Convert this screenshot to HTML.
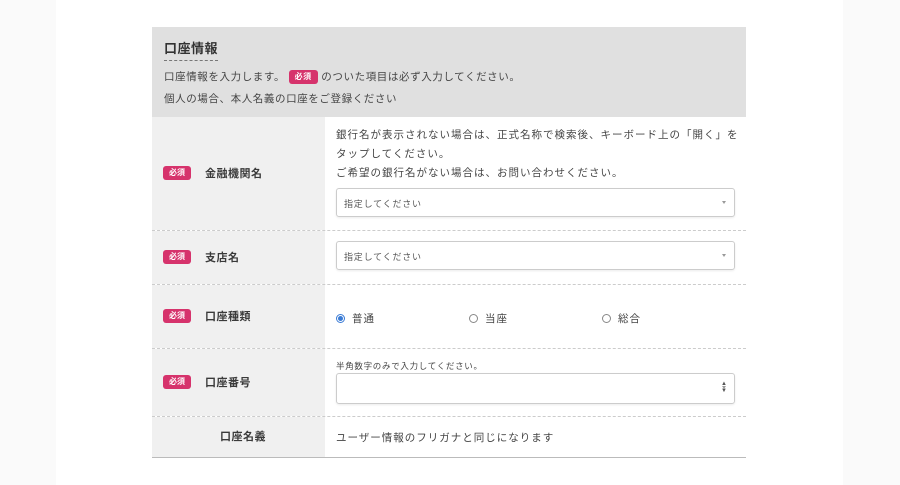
<!DOCTYPE html>
<html><head><meta charset="utf-8"><style>
*{margin:0;padding:0;box-sizing:border-box}
body{width:900px;height:485px;background:#fafafa;font-family:"Liberation Sans","Noto Sans CJK JP",sans-serif;color:#333;position:relative;overflow:hidden}
.col{position:absolute;left:56px;top:0;width:787px;height:485px;background:#fff}
.hd{position:absolute;left:152px;top:27px;width:594px;height:90px;background:#e0e0e0}
.hd h2{position:absolute;left:12px;top:11px;font-size:13px;font-weight:bold;color:#333;padding-bottom:3px;border-bottom:1px dashed #777;letter-spacing:.5px}
.hd p{position:absolute;left:12px;font-size:10.5px;color:#444;letter-spacing:.6px}
.badge{display:inline-block;background:#d6336c;color:#fff;font-size:8px;border-radius:3px;padding:1px 6px;line-height:12px;vertical-align:middle;font-weight:bold}
.row{position:absolute;left:152px;width:594px;border-bottom:1px dashed #ccc}
.lab{position:absolute;left:0;top:0;bottom:0;width:173px;background:#f0f0f0}
.lab .badge{position:absolute;left:11px;top:50%;margin-top:-8px}
.lab span.t{position:absolute;left:53px;top:50%;margin-top:-9px;font-size:11px;font-weight:bold;color:#3a3a3a;letter-spacing:.5px}
.ct{position:absolute;left:184px;font-size:10.5px;color:#444;letter-spacing:1px}
.sel{position:absolute;left:184px;width:399px;height:29px;border:1px solid #ccc;border-radius:3px;font-size:9px;color:#555;padding:8px 7px;letter-spacing:.8px;box-shadow:0 1px 2px rgba(0,0,0,.08)}
.sel:after{content:"";position:absolute;right:8px;top:12px;border:2.5px solid transparent;border-top:3.5px solid #999}
.rad{position:absolute;font-size:10.5px;color:#444;top:27px;letter-spacing:1px}
.rad i{display:inline-block;width:9px;height:9px;border:1px solid #888;border-radius:50%;margin-right:7px;vertical-align:-1px}
.rad i.on{border-color:#3a7bd5;background:radial-gradient(circle,#3a7bd5 2.2px,#fff 2.8px)}
</style></head><body>
<div class="col"></div>
<div class="hd">
<h2>口座情報</h2>
<p style="top:42px">口座情報を入力します。 <span class="badge">必須</span> のついた項目は必ず入力してください。</p>
<p style="top:64px">個人の場合、本人名義の口座をご登録ください</p>
</div>
<div class="row" style="top:117px;height:114px"><div class="lab"><span class="badge">必須</span><span class="t">金融機関名</span></div>
<div class="ct" style="top:9px;line-height:19px">銀行名が表示されない場合は、正式名称で検索後、キーボード上の「開く」を<br>タップしてください。<br>ご希望の銀行名がない場合は、お問い合わせください。</div>
<div class="sel" style="top:71px">指定してください</div></div>
<div class="row" style="top:231px;height:54px"><div class="lab"><span class="badge">必須</span><span class="t">支店名</span></div>
<div class="sel" style="top:10px">指定してください</div></div>
<div class="row" style="top:285px;height:64px"><div class="lab"><span class="badge">必須</span><span class="t">口座種類</span></div>
<div class="rad" style="left:184px;top:26px"><i class="on"></i>普通</div>
<div class="rad" style="left:317px;top:26px"><i></i>当座</div>
<div class="rad" style="left:450px;top:26px"><i></i>総合</div></div>
<div class="row" style="top:349px;height:68px"><div class="lab"><span class="badge">必須</span><span class="t">口座番号</span></div>
<div class="ct" style="top:11px;font-size:8.5px;letter-spacing:.7px">半角数字のみで入力してください。</div>
<div class="sel" style="top:24px;height:31px"></div>
<div style="position:absolute;left:569px;top:32px;font-size:6px;color:#555;line-height:7px">▲<br>▼</div></div>
<div class="row" style="top:417px;height:41px;border-bottom:1px solid #bbb"><div class="lab"><span class="t" style="left:68px">口座名義</span></div>
<div class="ct" style="top:13px">ユーザー情報のフリガナと同じになります</div></div>
</body></html>
